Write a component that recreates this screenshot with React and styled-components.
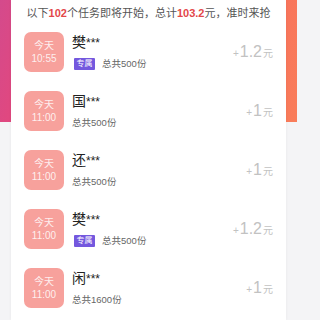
import React from "react";
import styled, { createGlobalStyle } from "styled-components";

const Global = createGlobalStyle`
  html, body { margin: 0; padding: 0; background: #f4f4f6; }
  body {
    font-family: "Liberation Sans", "Noto Sans CJK SC", sans-serif;
  }
`;

const Page = styled.div`
  width: 297px;
  height: 320px;
  overflow: hidden;
  background:
    linear-gradient(105deg, #d44a8c 0%, #f2456e 30%, #f6566a 55%, #f8705c 80%, #f97d5a 100%) top left / 100% 122px no-repeat,
    #f4f4f6;
`;

const Card = styled.div`
  margin: 0 11px;
  background: #fff;
  min-height: 320px;
  box-shadow: 0 0 3px rgba(0, 0, 0, 0.06);
`;

const Header = styled.div`
  box-sizing: border-box;
  height: 22px;
  padding-top: 5px;
  line-height: 16px;
  font-size: 11px;
  color: #555;
  text-align: center;
  white-space: nowrap;
`;

const Num = styled.b`
  color: #e3474a;
  font-weight: bold;
`;

const Row = styled.div`
  height: 59px;
  display: flex;
  align-items: center;
  padding: 0 13px;
`;

const TimeBox = styled.div`
  width: 40px;
  height: 40px;
  border-radius: 7px;
  background: #f7a19c;
  color: rgba(255, 255, 255, 0.85);
  display: flex;
  flex-direction: column;
  align-items: center;
  justify-content: center;
  font-size: 10px;
  line-height: 13px;
  flex-shrink: 0;
`;

const Info = styled.div`
  flex: 1;
  margin-left: 8px;
  height: 40px;
  display: flex;
  flex-direction: column;
`;

const Name = styled.div`
  font-size: 14px;
  line-height: 20px;
  color: #222;
`;

const Stars = styled.span`
  font-size: 12px;
`;

const Sub = styled.div`
  margin-top: 5px;
  display: flex;
  align-items: center;
  height: 12px;
`;

const Tag = styled.span`
  margin-left: 2px;
  margin-right: 7px;
  height: 12px;
  padding: 0 2.5px;
  background: #7458de;
  color: #fff;
  font-size: 8px;
  line-height: 12px;
  border-radius: 1px;
`;

const Total = styled.span`
  font-size: 9.5px;
  color: #666;
  line-height: 12px;
`;

const Amount = styled.div`
  color: #c2c2c2;
  white-space: nowrap;
  display: flex;
  align-items: baseline;
`;

const Plus = styled.span`
  font-size: 10px;
`;

const Value = styled.span`
  font-size: 16px;
  margin: 0 1px;
`;

const Unit = styled.span`
  font-size: 10px;
`;

const tasks = [
  { name: "樊", time: "10:55", tag: true, total: 500, amount: "1.2" },
  { name: "国", time: "11:00", tag: false, total: 500, amount: "1" },
  { name: "还", time: "11:00", tag: false, total: 500, amount: "1" },
  { name: "樊", time: "11:00", tag: true, total: 500, amount: "1.2" },
  { name: "闲", time: "11:00", tag: false, total: 1600, amount: "1" },
];

export default function App() {
  return (
    <>
      <Global />
      <Page>
        <Card>
          <Header>
            以下<Num>102</Num>个任务即将开始，总计<Num>103.2</Num>元，准时来抢
          </Header>
          {tasks.map((t, i) => (
            <Row key={i}>
              <TimeBox>
                <span>今天</span>
                <span>{t.time}</span>
              </TimeBox>
              <Info>
                <Name>
                  {t.name}
                  <Stars>***</Stars>
                </Name>
                <Sub>
                  {t.tag && <Tag>专属</Tag>}
                  <Total>总共{t.total}份</Total>
                </Sub>
              </Info>
              <Amount>
                <Plus>+</Plus>
                <Value>{t.amount}</Value>
                <Unit>元</Unit>
              </Amount>
            </Row>
          ))}
        </Card>
      </Page>
    </>
  );
}
